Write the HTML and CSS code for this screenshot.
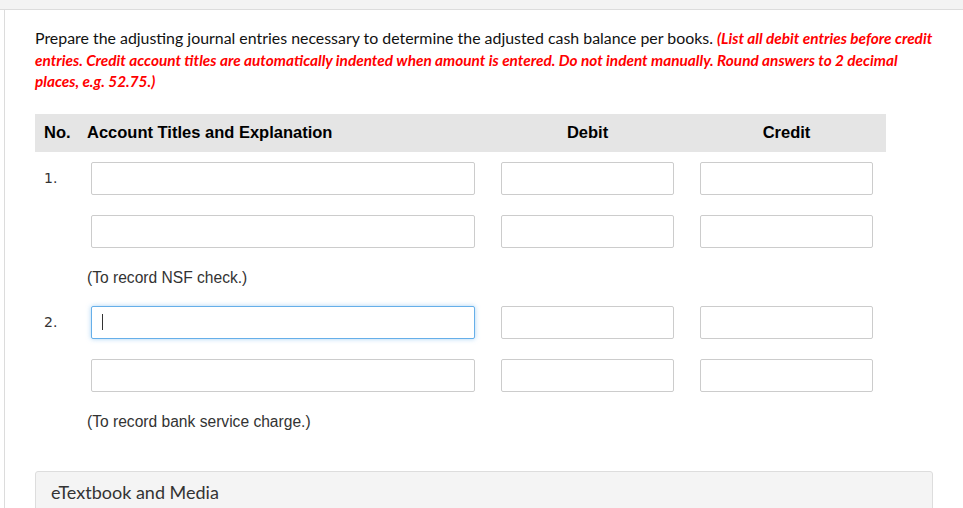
FILE: index.html
```html
<!DOCTYPE html>
<html>
<head>
<meta charset="utf-8">
<link rel="stylesheet" href="styles.css">
</head>
<body>
<div class="topbar"></div>
<div class="page">
  <div class="content">
    <p class="prompt">Prepare the adjusting journal entries necessary to determine the adjusted cash balance per books. <em class="note">(List all debit entries before credit entries. Credit account titles are automatically indented when amount is entered. Do not indent manually. Round answers to 2 decimal places, e.g. 52.75.)</em></p>

    <div class="journal">
      <div class="head">
        <div class="h-no">No.</div>
        <div class="h-acct">Account Titles and Explanation</div>
        <div class="h-amt">Debit</div>
        <div class="h-amt">Credit</div>
      </div>

      <div class="row">
        <div class="no">1.</div>
        <div class="acct"><div class="field"></div></div>
        <div class="amt"><div class="field"></div></div>
        <div class="amt"><div class="field"></div></div>
      </div>
      <div class="row">
        <div class="no"></div>
        <div class="acct"><div class="field"></div></div>
        <div class="amt"><div class="field"></div></div>
        <div class="amt"><div class="field"></div></div>
      </div>
      <div class="explain">(To record NSF check.)</div>

      <div class="row">
        <div class="no">2.</div>
        <div class="acct"><div class="field focus"><span class="caret"></span></div></div>
        <div class="amt"><div class="field"></div></div>
        <div class="amt"><div class="field"></div></div>
      </div>
      <div class="row">
        <div class="no"></div>
        <div class="acct"><div class="field"></div></div>
        <div class="amt"><div class="field"></div></div>
        <div class="amt"><div class="field"></div></div>
      </div>
      <div class="explain">(To record bank service charge.)</div>
    </div>

    <div class="media">eTextbook and Media</div>
  </div>
</div>
</body>
</html>
```
FILE: styles.css
```css
html, body {
  margin: 0;
  padding: 0;
  background: #fff;
}
body {
  font-family: Lato, "Open Sans", sans-serif;
  color: #222;
  overflow: hidden;
  height: 508px;
}
.topbar {
  height: 9px;
  background: #f3f3f3;
  border-bottom: 1px solid #dcdcdc;
}
.page {
  margin-left: 4px;
  border-left: 1px solid #dcdcdc;
  height: 498px;
  overflow: hidden;
}
.content {
  padding: 17px 26px 0 30px;
}
.prompt {
  margin: 0;
  width: 900px;
  font-size: 15.9px;
  line-height: 21.5px;
  color: #111;
}
.note {
  color: #ff0000;
  font-weight: bold;
  font-style: italic;
  font-size: 15.35px;
  line-height: 18px;
}
.journal {
  margin-top: 22px;
  width: 851px;
  font-family: "Liberation Sans", Arial, sans-serif;
}
.head {
  display: grid;
  grid-template-columns: 52px 401px 199px 199px;
  height: 38px;
  align-items: center;
  background: #e5e5e5;
  font-weight: bold;
  font-size: 16.5px;
  color: #000;
}
.h-no {
  padding-left: 9px;
}
.h-amt {
  text-align: center;
}
.row {
  display: grid;
  grid-template-columns: 52px 401px 199px 199px;
  height: 53px;
  align-items: center;
}
.no {
  padding-left: 9px;
  font-family: "DejaVu Sans", sans-serif;
  font-size: 14px;
  color: #333;
}
.acct {
  padding-left: 4px;
}
.acct .field {
  width: 384px;
}
.amt {
  padding-left: 13px;
}
.amt .field {
  width: 173px;
}
.field {
  box-sizing: border-box;
  height: 33px;
  border: 1px solid #cccccc;
  border-radius: 2px;
  background: #fff;
  display: flex;
  align-items: center;
}
.field.focus {
  border-color: #66afe9;
  box-shadow: 0 0 5px rgba(102, 175, 233, 0.55);
}
.caret {
  display: block;
  width: 1px;
  height: 16px;
  background: #333;
  margin-left: 10px;
}
.explain {
  height: 38px;
  line-height: 40px;
  padding-left: 52px;
  font-size: 15.6px;
  color: #333;
}
.media {
  margin-top: 31px;
  width: 898px;
  box-sizing: border-box;
  height: 60px;
  background: #f4f4f4;
  border: 1px solid #dddddd;
  border-radius: 3px;
  padding: 9px 15px;
  font-size: 18px;
  color: #333;
}
```
